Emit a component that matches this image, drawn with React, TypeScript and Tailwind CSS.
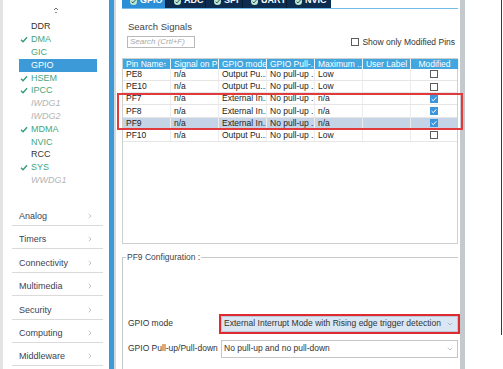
import { ChevronRight, ChevronDown } from "lucide-react";

type SideItem = {
  name: string;
  kind: "dark" | "green" | "disabled" | "selected";
  check?: boolean;
};

const sideItems: SideItem[] = [
  { name: "DDR", kind: "dark" },
  { name: "DMA", kind: "green", check: true },
  { name: "GIC", kind: "green" },
  { name: "GPIO", kind: "selected" },
  { name: "HSEM", kind: "green", check: true },
  { name: "IPCC", kind: "green", check: true },
  { name: "IWDG1", kind: "disabled" },
  { name: "IWDG2", kind: "disabled" },
  { name: "MDMA", kind: "green", check: true },
  { name: "NVIC", kind: "green" },
  { name: "RCC", kind: "dark" },
  { name: "SYS", kind: "green", check: true },
  { name: "WWDG1", kind: "disabled" },
];

const categories = ["Analog", "Timers", "Connectivity", "Multimedia", "Security", "Computing", "Middleware"];

const tabs = [
  { name: "GPIO", w: "w-[43px]", active: true },
  { name: "ADC", w: "w-[39px]" },
  { name: "SPI", w: "w-[36px]" },
  { name: "UART", w: "w-[43px]" },
  { name: "NVIC", w: "w-[44px]" },
];

type PinRow = {
  pin: string;
  mode: string;
  speed: string;
  modified: boolean;
  selected?: boolean;
};

const pins: PinRow[] = [
  { pin: "PE8", mode: "Output Pu...", speed: "Low", modified: false },
  { pin: "PE10", mode: "Output Pu...", speed: "Low", modified: false },
  { pin: "PF7", mode: "External In...", speed: "n/a", modified: true },
  { pin: "PF8", mode: "External In...", speed: "n/a", modified: true },
  { pin: "PF9", mode: "External In...", speed: "n/a", modified: true, selected: true },
  { pin: "PF10", mode: "Output Pu...", speed: "Low", modified: false },
];

function CheckMark({ className }: { className?: string }) {
  return (
    <svg viewBox="0 0 9 8" className={className} aria-hidden="true">
      <polyline points="1,4.2 3.4,6.6 8,1.4" fill="none" stroke="currentColor" strokeWidth={1.5} />
    </svg>
  );
}

/* ── 左侧外设列表 ───────────────────────────── */
function Sidebar() {
  return (
    <aside className="flex h-full w-[109px] shrink-0 flex-col border-l-[3px] border-[#e3e3e3] bg-white">
      <div className="flex h-[20.6px] w-full items-center justify-center">
        <svg viewBox="0 0 6 8" className="h-[8px] w-[6px] text-[#777]" aria-hidden="true">
          <path d="M1 4 L3 2 L5 4" fill="none" stroke="currentColor" strokeWidth={1} />
          <line x1="2" y1="6.5" x2="4" y2="6.5" stroke="currentColor" strokeWidth={0.8} />
        </svg>
      </div>
      <ul className="ml-[16px] w-[78px]">
        {sideItems.map((it) => (
          <li
            key={it.name}
            className={`flex h-[12.8px] items-center pl-[1px] text-[9px] leading-none ${
              it.kind === "selected"
                ? "bg-[#3d9ad9] text-white"
                : it.kind === "green"
                  ? "text-[#45a67c]"
                  : it.kind === "disabled"
                    ? "italic text-[#b4b4b4]"
                    : "text-[#333]"
            }`}
          >
            <span className="flex w-[11px] items-center">
              {it.check && <CheckMark className="h-[7px] w-[8px] text-[#2f9b72]" />}
            </span>
            {it.name}
          </li>
        ))}
      </ul>
      <div className="mt-[15.6px] ml-[9px] w-[91px]">
        {categories.map((c) => (
          <div
            key={c}
            className="flex h-[23.4px] items-end justify-between border-b border-[#dadada] pb-[3px] pl-[7px] pr-[9px] text-[9px] leading-[11px] text-[#3c3f55]"
          >
            <span>{c}</span>
            <ChevronRight className="mb-[2px] h-[8px] w-[8px] text-[#8a8a8a]" strokeWidth={1.5} />
          </div>
        ))}
      </div>
    </aside>
  );
}

function Checkbox({ checked }: { checked: boolean }) {
  return checked ? (
    <span className="flex h-[8px] w-[8px] items-center justify-center bg-[#3b95dc]">
      <CheckMark className="h-[6px] w-[6px] text-white" />
    </span>
  ) : (
    <span className="h-[8px] w-[8px] border border-[#5c5c5c] bg-white" />
  );
}

/* ── 引脚表格 ───────────────────────────────── */
function PinTable() {
  const headers = ["Pin Name", "Signal on Pin", "GPIO mode", "GPIO Pull-...", "Maximum ...", "User Label", "Modified"];
  return (
    <div className="relative mt-[9px] h-[186px] w-[336px] border border-[#cfcfcf] bg-white">
      <div className="flex h-[10px]">
        {headers.map((h, i) => (
          <div
            key={h}
            className={`flex h-full w-[48px] shrink-0 items-center overflow-hidden whitespace-nowrap border-r border-[#e8f4fb] bg-[#43a7df] px-[3px] text-[8.5px] leading-none text-white ${
              i >= 5 ? "justify-center" : ""
            }`}
          >
            {h}
            {i === 0 && (
              <svg viewBox="0 0 5 6" className="ml-auto h-[6px] w-[5px] text-[#cfe8f7]" aria-hidden="true">
                <path d="M0.5 3 L2.5 0.8 L4.5 3 Z" fill="currentColor" />
                <line x1="0.5" y1="4.8" x2="4.5" y2="4.8" stroke="currentColor" strokeWidth={0.8} />
              </svg>
            )}
          </div>
        ))}
      </div>
      {pins.map((p) => (
        <div
          key={p.pin}
          className={`flex h-[12.2px] border-b border-[#e6e6e6] text-[8.5px] leading-none text-[#222] ${
            p.selected ? "bg-[#c4d4e6]" : ""
          }`}
        >
          {[p.pin, "n/a", p.mode, "No pull-up ...", p.speed, ""].map((v, i) => (
            <div
              key={i}
              className="flex h-full w-[48px] shrink-0 items-center overflow-hidden whitespace-nowrap border-r border-[#ececec] px-[3px]"
            >
              {v}
            </div>
          ))}
          <div className="flex h-full w-[48px] items-center justify-center">
            <Checkbox checked={p.modified} />
          </div>
        </div>
      ))}
      <div className="pointer-events-none absolute left-[-6px] top-[34px] h-[37px] w-[346px] border-2 border-[#e03a3d]" />
    </div>
  );
}

/* ── 配置区 ─────────────────────────────────── */
function Configuration() {
  return (
    <fieldset className="mt-[8px] flex-1 border-l border-t border-[#c8c8c8]">
      <legend className="ml-[3px] px-[1px] text-[8.5px] leading-[11px] text-[#444]">PF9 Configuration :</legend>
      <div className="mt-[53px] flex items-center pl-[5px]">
        <span className="w-[93px] text-[8.5px] text-[#333]">GPIO mode</span>
        <div className="relative flex h-[16px] w-[237px] items-center justify-between border border-[#b9c9da] bg-[#dae6f3] pl-[2px] pr-[3px] text-[8.5px] text-[#333]">
          <span>External Interrupt Mode with Rising edge trigger detection</span>
          <ChevronDown className="h-[8px] w-[8px] text-[#888]" strokeWidth={1.5} />
          <div className="pointer-events-none absolute -inset-[3px] border-2 border-[#e02a30]" />
        </div>
      </div>
      <div className="mt-[8px] flex items-center pl-[5px]">
        <span className="w-[93px] text-[8.5px] text-[#333]">GPIO Pull-up/Pull-down</span>
        <div className="flex h-[18px] w-[237px] items-center justify-between border border-[#c6c6c6] bg-white pl-[2px] pr-[3px] text-[8.5px] text-[#333]">
          <span>No pull-up and no pull-down</span>
          <ChevronDown className="h-[8px] w-[8px] text-[#888]" strokeWidth={1.5} />
        </div>
      </div>
    </fieldset>
  );
}

/* ── 根布局 ─────────────────────────────────── */
export default function App() {
  return (
    <div className="flex h-[369px] w-[503px] overflow-hidden bg-white font-['Liberation_Sans',Arial,sans-serif]">
      <Sidebar />
      <div className="h-full w-[5px] shrink-0 bg-[#3d9ad8]" />
      <div className="h-full w-[2px] shrink-0 bg-[#d5d9dc]" />

      <main className="flex h-full w-[344px] shrink-0 flex-col pl-[6px] pr-[2px]">
        <div className="flex h-[8px] w-fit gap-[1px] bg-[#061c33]">
          {tabs.map((t) => (
            <div key={t.name} className={`${t.w} h-[8px] overflow-hidden ${t.active ? "bg-[#2b8ed6]" : "bg-[#0d2d50]"}`}>
              <div className="-mt-[6px] flex h-[14px] items-center gap-[3px] pl-[8px] text-[9px] font-bold text-white">
                <span className="flex h-[7px] w-[7px] items-center justify-center rounded-full bg-[#bfe9cf]">
                  <CheckMark className="h-[5px] w-[5px] text-[#0d2d50]" />
                </span>
                {t.name}
              </div>
            </div>
          ))}
        </div>
        <div className="h-[1px] w-full bg-[#74bbe8]" />

        <div className="mt-[12px] pl-[6px] text-[9.5px] leading-[11px] text-[#444]">Search Signals</div>
        <div className="mt-[4px] flex items-center justify-between pl-[5px] pr-[3px]">
          <div className="flex h-[12px] w-[68px] items-center border border-[#b9b9b9] pl-[2px] text-[8px] italic text-[#a8a8a8]">
            Search (Crtl+F)
          </div>
          <label className="flex items-center gap-[3px] text-[8.5px] text-[#333]">
            <span className="h-[8px] w-[8px] border border-[#5c5c5c]" />
            Show only Modified Pins
          </label>
        </div>

        <PinTable />
        <Configuration />
      </main>

      <div className="h-full w-[5px] shrink-0 bg-[#c4c9cd]" />
      <div className="flex h-full w-[38px] shrink-0 justify-end pr-[1px]">
        <div className="h-[335px] w-[1px] bg-[#3a3a3a]" />
      </div>
    </div>
  );
}
